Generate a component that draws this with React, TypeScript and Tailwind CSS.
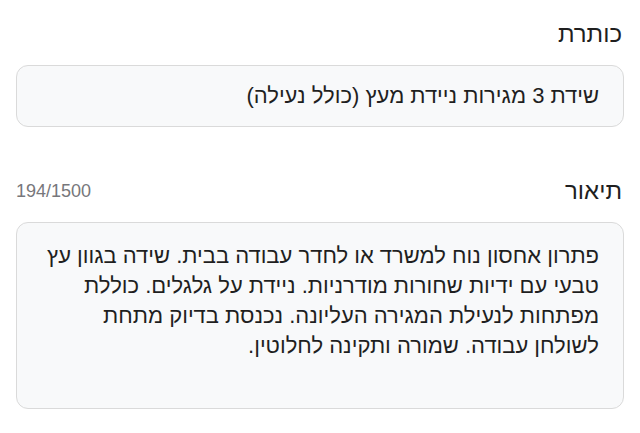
import React from "react";

const description =
  "פתרון אחסון נוח למשרד או לחדר עבודה בבית. שידה בגוון עץ טבעי עם ידיות שחורות מודרניות. ניידת על גלגלים. כוללת מפתחות לנעילת המגירה העליונה. נכנסת בדיוק מתחת לשולחן עבודה. שמורה ותקינה לחלוטין.";

const App = () => {
  return (
    <div
      dir="rtl"
      className="min-h-screen bg-white px-4 pt-[20px] font-['Liberation_Sans',Arial,sans-serif] text-[#1c1c1e]"
    >
      <div className="flex items-center justify-between h-[28px] pr-[2px]">
        <span className="text-[24px] leading-[28px] text-[#1f1f1f]">כותרת</span>
      </div>
      <div className="mt-[17px] h-[62px] flex items-center rounded-[12px] border border-[#dadada] bg-[#f8f9fa] px-[24px]">
        <span className="text-[22px] leading-[26px] text-[#1f1f1f]">שידת 3 מגירות ניידת מעץ (כולל נעילה)</span>
      </div>
      <div className="mt-[50px] flex items-center justify-between h-[28px] pr-[2px]">
        <span className="text-[24px] leading-[28px] text-[#1f1f1f]">תיאור</span>
        <span dir="ltr" className="text-[18px] leading-[28px] text-[#77777b]">194/1500</span>
      </div>
      <div className="mt-[17px] h-[187px] rounded-[12px] border border-[#dadada] bg-[#f8f9fa] px-[24px] pt-[18px]">
        <p className="text-[22px] leading-[30px] text-[#1f1f1f]">{description}</p>
      </div>
    </div>
  );
};

export default App;
